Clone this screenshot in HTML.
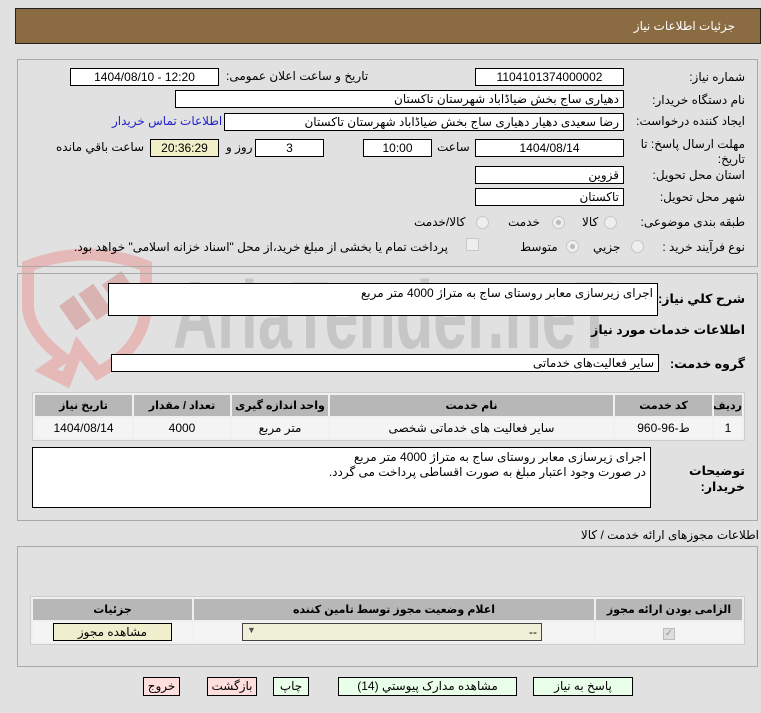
<!DOCTYPE html>
<html><head><meta charset="utf-8"><style>
*{box-sizing:border-box;margin:0;padding:0}
body{width:761px;height:713px;background:#e1e1e1;font-family:"Liberation Sans","DejaVu Sans",sans-serif;font-size:12px;color:#000;position:relative;overflow:hidden}
.a{position:absolute;white-space:nowrap}
.hdr{left:15px;top:8px;width:746px;height:36px;background:#8b6c42;border:1px solid #222}
.panel{position:absolute;border:1px solid #a9a9a9;left:17px;width:741px}
.box{position:absolute;background:#fff;border:1px solid #000;height:18px;line-height:16px;padding:0 4px;white-space:nowrap;overflow:hidden}
.c{text-align:center}.r{text-align:right;direction:rtl}
.lbl{position:absolute;direction:rtl;text-align:right;white-space:nowrap}
.b{font-weight:bold;font-size:12.5px}
.radio{position:absolute;width:13px;height:13px;border-radius:50%;border:1px solid #c8c8c8;background:#eee}
.radio.on::after{content:"";position:absolute;left:3px;top:3px;width:5px;height:5px;border-radius:50%;background:#bbb}
table{border-collapse:separate;border-spacing:2px;position:absolute;background:#f0f0f0;border:1px solid #ccc;table-layout:fixed}
th{background:#b7b7b7;font-weight:bold;height:21px;font-size:11px;white-space:nowrap;padding:0;overflow:hidden}
td{background:#f4f4f4;text-align:center;height:20px;padding:0;white-space:nowrap}
.btn{position:absolute;height:19px;border:1px solid #000;text-align:center;line-height:17px;font-size:12px;white-space:nowrap}
</style></head><body>
<div class="a hdr"></div>
<div class="a" style="right:26px;top:19px;color:#fff;font-size:12px;direction:rtl">جزئیات اطلاعات نیاز</div>

<svg class="a" style="left:18px;top:248px" width="620" height="145" viewBox="0 0 620 145">
<path d="M10 18 Q70 -5 128 18 L128 60 Q125 100 80 125 L60 100 L48 132 L28 122 L45 110 Q12 85 10 60 Z" fill="none" stroke="#e6b9b9" stroke-width="12"/>
<rect x="48" y="50" width="18" height="30" transform="rotate(-35 57 65)" fill="#d9b2b2"/>
<rect x="68" y="38" width="18" height="32" transform="rotate(-35 77 54)" fill="#d9b2b2"/>
<rect x="88" y="28" width="24" height="22" transform="rotate(-35 100 39)" fill="#d9b2b2"/>
<text x="155" y="100" font-family="Liberation Sans Narrow,Liberation Sans,sans-serif" font-weight="bold" font-size="96" fill="#c6c6c6" textLength="440" lengthAdjust="spacingAndGlyphs">AriaTender.neT</text>
</svg>

<div class="panel" style="top:59px;height:208px"></div>
<div class="lbl" style="right:16px;top:70px">شماره نیاز:</div>
<div class="box c" style="left:475px;top:68px;width:149px">1104101374000002</div>
<div class="lbl" style="left:226px;top:69px">تاریخ و ساعت اعلان عمومی:</div>
<div class="box c" style="left:70px;top:68px;width:149px">1404/08/10 - 12:20</div>

<div class="lbl" style="right:16px;top:93px">نام دستگاه خریدار:</div>
<div class="box r" style="left:175px;top:90px;width:449px">دهیاری ساج بخش ضیاڈاباد شهرستان تاکستان</div>

<div class="lbl" style="right:16px;top:114px">ایجاد کننده درخواست:</div>
<div class="box r" style="left:224px;top:113px;width:400px">رضا سعیدی دهیار دهیاری ساج بخش ضیاڈاباد شهرستان تاکستان</div>
<div class="lbl" style="left:112px;top:114px;color:#2222cc">اطلاعات تماس خریدار</div>

<div class="lbl" style="right:16px;top:137px;line-height:15px">مهلت ارسال پاسخ: تا<br>تاریخ:</div>
<div class="box c" style="left:475px;top:139px;width:149px">1404/08/14</div>
<div class="lbl" style="left:437px;top:140px">ساعت</div>
<div class="box c" style="left:363px;top:139px;width:69px">10:00</div>
<div class="box c" style="left:255px;top:139px;width:69px">3</div>
<div class="lbl" style="left:226px;top:140px">روز و</div>
<div class="box c" style="left:150px;top:139px;width:69px;background:#f0efc8">20:36:29</div>
<div class="lbl" style="left:56px;top:140px">ساعت باقي مانده</div>

<div class="lbl" style="right:16px;top:168px">استان محل تحویل:</div>
<div class="box r" style="left:475px;top:166px;width:149px">قزوین</div>
<div class="lbl" style="right:16px;top:190px">شهر محل تحویل:</div>
<div class="box r" style="left:475px;top:188px;width:149px">تاکستان</div>

<div class="lbl" style="right:16px;top:215px">طبقه بندی موضوعی:</div>
<div class="radio" style="left:604px;top:216px"></div><div class="lbl" style="left:582px;top:215px">کالا</div>
<div class="radio on" style="left:552px;top:216px"></div><div class="lbl" style="left:508px;top:215px">خدمت</div>
<div class="radio" style="left:476px;top:216px"></div><div class="lbl" style="left:414px;top:215px">کالا/خدمت</div>

<div class="lbl" style="right:16px;top:240px">نوع فرآیند خرید :</div>
<div class="radio" style="left:631px;top:240px"></div><div class="lbl" style="left:593px;top:240px">جزیي</div>
<div class="radio on" style="left:566px;top:240px"></div><div class="lbl" style="left:520px;top:240px">متوسط</div>
<div class="a" style="left:466px;top:238px;width:13px;height:13px;border:1px solid #c8c8c8;background:#eee"></div>
<div class="lbl" style="left:74px;top:240px">پرداخت تمام یا بخشی از مبلغ خرید،از محل "اسناد خزانه اسلامی" خواهد بود.</div>

<div class="panel" style="top:273px;height:248px"></div>
<div class="lbl b" style="right:16px;top:291px">شرح کلي نياز:</div>
<div class="box r" style="left:108px;top:283px;width:550px;height:33px;padding-top:1px">اجرای زیرسازی معابر روستای ساج به متراژ 4000 متر مربع</div>
<div class="lbl b" style="right:16px;top:322px">اطلاعات خدمات مورد نیاز</div>
<div class="lbl b" style="right:16px;top:356px">گروه خدمت:</div>
<div class="box r" style="left:111px;top:354px;width:548px">سایر فعالیت‌های خدماتی</div>

<table style="left:32px;top:392px;width:713px;direction:rtl">
<tr><th style="width:28px">ردیف</th><th style="width:97px">کد خدمت</th><th style="width:283px">نام خدمت</th><th style="width:96px">واحد اندازه گیری</th><th style="width:96px">تعداد / مقدار</th><th>تاریخ نیاز</th></tr>
<tr><td>1</td><td>ط-96-960</td><td>سایر فعالیت های خدماتی شخصی</td><td>متر مربع</td><td>4000</td><td>1404/08/14</td></tr>
</table>

<div class="lbl b" style="right:16px;top:463px;line-height:16px">توضیحات<br>خریدار:</div>
<div class="box r" style="left:32px;top:447px;width:619px;height:61px;line-height:15px;padding-top:2px;white-space:normal">اجرای زیرسازی معابر روستای ساج به متراژ 4000 متر مربع<br>در صورت وجود اعتبار مبلغ به صورت اقساطی پرداخت می گردد.</div>

<div class="lbl" style="right:2px;top:528px">اطلاعات مجوزهای ارائه خدمت / کالا</div>
<div class="panel" style="top:546px;height:121px"></div>
<table style="left:30px;top:596px;width:715px;direction:rtl">
<tr><th style="width:146px">الزامی بودن ارائه مجوز</th><th style="width:400px">اعلام وضعیت مجوز توسط تامین کننده</th><th>جزئیات</th></tr>
<tr><td><span style="display:inline-block;width:12px;height:12px;background:#ddd;border:1px solid #bbb;color:#999;font-size:10px;line-height:10px">✓</span></td><td><div style="margin:0 auto 0 48px;width:300px;height:18px;border:1px solid #444;background:#f0efd8;position:relative"><span class="a" style="right:4px;top:1px">--</span><span class="a" style="left:4px;top:1px;font-size:9px;color:#555">▼</span></div></td><td><div style="margin:0 auto;width:119px;height:18px;border:1px solid #000;background:#efeecd;line-height:16px">مشاهده مجوز</div></td></tr>
</table>

<div class="btn" style="left:533px;top:677px;width:100px;background:#eaffea">پاسخ به نیاز</div>
<div class="btn" style="left:338px;top:677px;width:179px;background:#eaffea">مشاهده مدارک پیوستي (14)</div>
<div class="btn" style="left:273px;top:677px;width:36px;background:#eaffea">چاپ</div>
<div class="btn" style="left:207px;top:677px;width:50px;background:#ffdede">بازگشت</div>
<div class="btn" style="left:143px;top:677px;width:37px;background:#ffdede">خروج</div>
</body></html>
